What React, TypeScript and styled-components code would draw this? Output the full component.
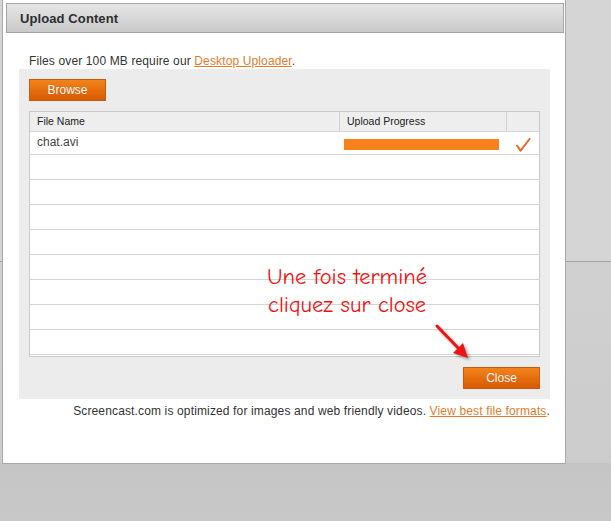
import React from "react";
import styled, { createGlobalStyle } from "styled-components";

const Global = createGlobalStyle`
  html, body { margin: 0; padding: 0; }
  body { overflow: hidden; font-family: "Liberation Sans", Arial, sans-serif; }
`;

const Page = styled.div`
  width: 611px;
  height: 521px;
  background: linear-gradient(
    to bottom,
    #d5d5d5 0px,
    #d5d5d5 261px,
    #a3a3a3 261px,
    #a3a3a3 262px,
    #d0d0d0 262px,
    #cccccc 463px,
    #c5c5c5 463px,
    #c8c8c8 521px
  );
  overflow: hidden;
`;

const Dialog = styled.div`
  box-sizing: border-box;
  margin-left: 2px;
  width: 564px;
  height: 464px;
  background: #ffffff;
  border: 1px solid #a8a8a8;
  border-top: none;
  display: flex;
  flex-direction: column;
`;

const Header = styled.div`
  box-sizing: border-box;
  margin: 3px 1px 0 3px;
  height: 30px;
  border: 1px solid #a4a4a4;
  background: linear-gradient(to bottom, #e6e6e6, #c9c9c9);
  display: flex;
  align-items: center;
  padding-left: 13px;
`;

const Title = styled.h1`
  margin: 0;
  font-size: 13px;
  font-weight: bold;
  color: #2e2e2e;
  letter-spacing: 0.1px;
`;

const Intro = styled.p`
  margin: 21px 0 0 26px;
  font-size: 12px;
  line-height: 15px;
  color: #333;
  letter-spacing: 0.13px;
`;

const Link = styled.a`
  color: #e07d2c;
  text-decoration: underline;
  cursor: pointer;
`;

const Panel = styled.div`
  position: relative;
  margin: 0 15px 0 16px;
  padding: 10px;
  background: #ececec;
  display: flex;
  flex-direction: column;
  align-items: flex-start;
`;

const OrangeButton = styled.button<{ $right?: boolean }>`
  box-sizing: border-box;
  width: 77px;
  height: 22px;
  padding: 0;
  border: 1px solid #c85a12;
  background: linear-gradient(to bottom, #f2841c, #d95a02);
  color: #ffffff;
  font-family: "Liberation Sans", Arial, sans-serif;
  font-size: 12px;
  text-shadow: 0 0 1px rgba(120, 40, 0, 0.4);
  cursor: pointer;
  align-self: ${(p) => (p.$right ? "flex-end" : "flex-start")};
  margin-top: ${(p) => (p.$right ? "10px" : "0")};
`;

const Table = styled.div`
  box-sizing: border-box;
  margin-top: 10px;
  width: 100%;
  height: 246px;
  border: 1px solid #c9c9c9;
  background: #ffffff;
  display: flex;
  flex-direction: column;
`;

const HeadRow = styled.div`
  display: grid;
  grid-template-columns: 310px 167px 1fr;
  height: 19px;
  background: #eeeeee;
  border-bottom: 1px solid #d6d6d6;
`;

const HeadCell = styled.div<{ $last?: boolean }>`
  box-sizing: border-box;
  border-right: ${(p) => (p.$last ? "none" : "1px solid #d2d2d2")};
  padding-left: 7px;
  font-size: 10.5px;
  line-height: 19px;
  color: #222;
`;

const Body = styled.div`
  flex: 1;
  overflow: hidden;
`;

const Row = styled.div<{ $first?: boolean }>`
  display: grid;
  grid-template-columns: 310px 167px 1fr;
  height: ${(p) => (p.$first ? "22px" : "24px")};
  border-bottom: 1px solid #d4d4d4;
`;

const NameCell = styled.div`
  padding-left: 7px;
  font-size: 12px;
  line-height: 20px;
  color: #444;
`;

const ProgressCell = styled.div`
  padding: 7px 0 0 4px;
`;

const Bar = styled.div`
  width: 155px;
  height: 11px;
  background: #f7821c;
`;

const CheckCell = styled.div`
  padding: 6px 0 0 9px;
`;

const Footer = styled.p`
  margin: 5px 15px 0 0;
  text-align: right;
  font-size: 12px;
  line-height: 15px;
  color: #333;
  letter-spacing: 0.14px;
`;

const Note = styled.div`
  position: absolute;
  left: 218px;
  top: 194px;
  width: 220px;
  text-align: center;
  font-family: "Comic Sans MS", "Comic Neue", "Noto Sans", sans-serif;
  font-size: 22.5px;
  line-height: 28px;
  color: #ee1111;
  pointer-events: none;
`;

const Arrow = styled.svg`
  position: absolute;
  left: 413px;
  top: 251px;
  overflow: visible;
  filter: drop-shadow(2px 2px 1.5px rgba(0, 0, 0, 0.35));
`;

const Check = () => (
  <svg width="15" height="14" viewBox="0 0 15 14">
    <path
      d="M1 7.5 L4.6 12.6 L13.6 1"
      fill="none"
      stroke="#e36b2b"
      strokeWidth="2"
      strokeLinecap="round"
      strokeLinejoin="round"
    />
  </svg>
);

export default function App() {
  const empty = Array.from({ length: 8 });
  return (
    <>
      <Global />
      <Page>
        <Dialog>
          <Header>
            <Title>Upload Content</Title>
          </Header>
          <Intro>
            Files over 100 MB require our <Link>Desktop Uploader</Link>.
          </Intro>
          <Panel>
            <OrangeButton>Browse</OrangeButton>
            <Table>
              <HeadRow>
                <HeadCell>File Name</HeadCell>
                <HeadCell>Upload Progress</HeadCell>
                <HeadCell $last />
              </HeadRow>
              <Body>
                <Row $first>
                  <NameCell>chat.avi</NameCell>
                  <ProgressCell>
                    <Bar />
                  </ProgressCell>
                  <CheckCell>
                    <Check />
                  </CheckCell>
                </Row>
                {empty.map((_, i) => (
                  <Row key={i} />
                ))}
              </Body>
            </Table>
            <OrangeButton $right>Close</OrangeButton>
            <Note>
              Une fois terminé
              <br />
              cliquez sur close
            </Note>
            <Arrow width="40" height="40" viewBox="0 0 40 40">
              <line x1="5" y1="6" x2="29" y2="31" stroke="#ee1414" strokeWidth="3" strokeLinecap="round" />
              <polygon points="36,38 21,33 31,23" fill="#ee1414" />
            </Arrow>
          </Panel>
          <Footer>
            Screencast.com is optimized for images and web friendly videos.{" "}
            <Link>View best file formats</Link>.
          </Footer>
        </Dialog>
      </Page>
    </>
  );
}
